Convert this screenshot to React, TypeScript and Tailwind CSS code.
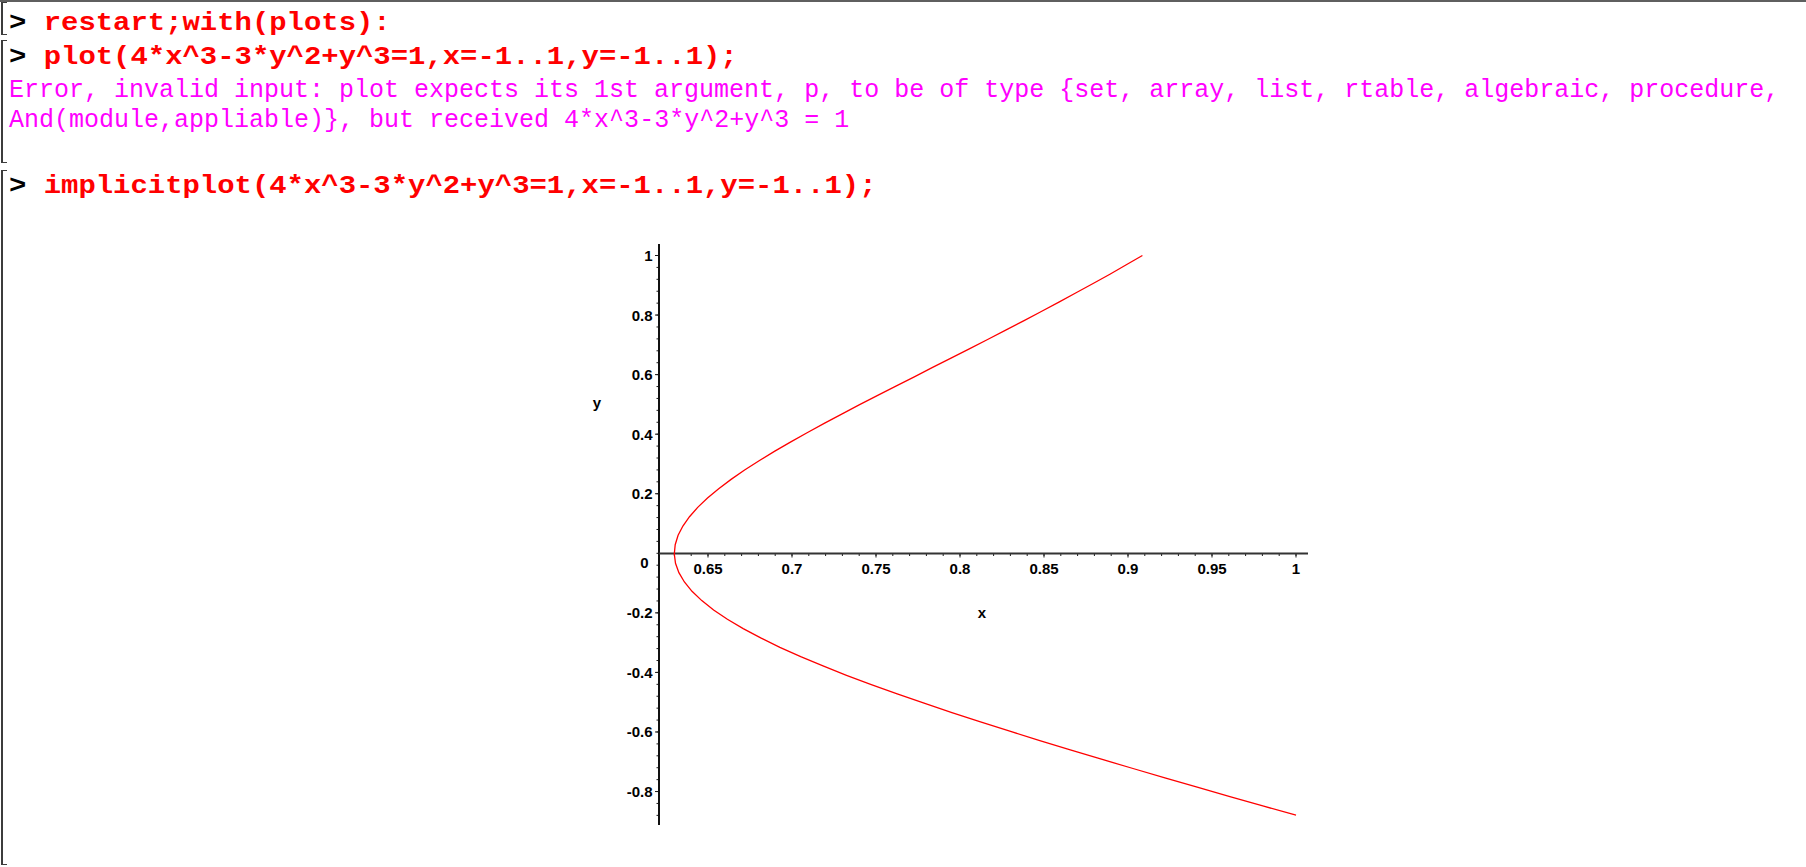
import React from 'react';

// page coords: x -> 708 at 0.65, 1680 px per unit; y -> 554.3 at 0, 297.8 px per unit
const px = (v: number) => 708 + (v - 0.65) * 1680;
const py = (v: number) => 554.3 - v * 297.8;

const curve = (() => {
  const out: string[] = [];
  const y0 = -0.879385;
  const n = 60;
  for (let i = 0; i <= n; i++) {
    const y = y0 + ((1 - y0) * i) / n;
    const x = Math.cbrt((1 + 3 * y * y - y * y * y) / 4);
    out.push(`${px(x).toFixed(1)},${py(y).toFixed(1)}`);
  }
  return out.join(' ');
})();

const xMajor = [0.65, 0.7, 0.75, 0.8, 0.85, 0.9, 0.95, 1];
const xLabels = ['0.65', '0.7', '0.75', '0.8', '0.85', '0.9', '0.95', '1'];
const yMajor = [1, 0.8, 0.6, 0.4, 0.2, -0.2, -0.4, -0.6, -0.8];
const yLabels = ['1', '0.8', '0.6', '0.4', '0.2', '-0.2', '-0.4', '-0.6', '-0.8'];

function Plot() {
  const xMinor: number[] = [];
  for (let i = 63; i <= 100; i++) xMinor.push(i / 100);
  const yMinor: number[] = [];
  for (let i = -22; i <= 25; i++) yMinor.push(i * 0.04);

  return (
    <svg width="760" height="610" viewBox="560 230 760 610" className="block ml-[551px] mt-[31px]">
      <g stroke="#1a1a1a" strokeWidth="1">
        {xMinor.map((v) => (
          <line key={'xm' + v} x1={px(v)} x2={px(v)} y1={554} y2={557} />
        ))}
        {xMajor.map((v) => (
          <line key={'xM' + v} x1={px(v)} x2={px(v)} y1={554} y2={558.5} />
        ))}
        {yMinor.map((v) => (
          <line key={'ym' + v} x1={656.5} x2={659} y1={py(v)} y2={py(v)} />
        ))}
        {yMajor.map((v) => (
          <line key={'yM' + v} x1={655} x2={659} y1={py(v)} y2={py(v)} />
        ))}
      </g>
      <line x1="659" x2="659" y1="245" y2="826" stroke="#111" strokeWidth="2" />
      <line x1="659" x2="1308" y1="554.5" y2="554.5" stroke="#333" strokeWidth="2" />
      <polyline points={curve} fill="none" stroke="#ff0000" strokeWidth="1.3" />
      <g fontFamily="'Liberation Sans', Arial, sans-serif" fontWeight="bold" fontSize="15" fill="#000">
        {xMajor.map((v, i) => (
          <text key={'xl' + v} x={px(v)} y={575} textAnchor="middle">
            {xLabels[i]}
          </text>
        ))}
        {yMajor.map((v, i) => (
          <text key={'yl' + v} x={652.5} y={py(v) + 5.5} textAnchor="end">
            {yLabels[i]}
          </text>
        ))}
        <text x={648.5} y={568.5} textAnchor="end">0</text>
        <text x={597} y={409} textAnchor="middle">y</text>
        <text x={982} y={619} textAnchor="middle">x</text>
      </g>
    </svg>
  );
}

function Input({ code, lead = 'h-[30px] leading-[30px]' }: { code: string; lead?: string }) {
  return (
    <div
      className={`${lead} whitespace-pre font-bold text-[26px] origin-left scale-x-[1.112] font-['Liberation_Mono','Courier_New',monospace]`}
    >
      <span className="text-black">&gt; </span>
      <span className="text-[#ff0000]">{code}</span>
    </div>
  );
}

function Bracket() {
  return <div className="w-[6px] ml-[1px] shrink-0 border-l-2 border-y border-[#3c3c3c]" />;
}

export default function App() {
  return (
    <div className="w-[1806px] h-[867px] bg-white border-t-2 border-[#5f5f5f] overflow-hidden">
      <div className="flex h-[33px]">
        <Bracket />
        <div className="flex-1 pl-[2px] pt-[6px]">
          <Input code="restart;with(plots):" />
        </div>
      </div>

      <div className="flex h-[123px] mt-[5px]">
        <Bracket />
        <div className="flex-1 pl-[2px] pt-[2px]">
          <Input code="plot(4*x^3-3*y^2+y^3=1,x=-1..1,y=-1..1);" />
          <div className="mt-[4px] whitespace-pre text-[25px] leading-[30px] text-[#ff00ff] font-['Liberation_Mono','Courier_New',monospace]">
            <div>Error, invalid input: plot expects its 1st argument, p, to be of type {'{'}set, array, list, rtable, algebraic, procedure,</div>
            <div>And(module,appliable){'}'}, but received 4*x^3-3*y^2+y^3 = 1</div>
          </div>
        </div>
      </div>

      <div className="flex h-[695px] mt-[7px]">
        <Bracket />
        <div className="flex-1 pl-[2px] pt-[4px]">
          <Input code="implicitplot(4*x^3-3*y^2+y^3=1,x=-1..1,y=-1..1);" lead="h-[24px] leading-[24px]" />
          <Plot />
        </div>
      </div>
    </div>
  );
}
